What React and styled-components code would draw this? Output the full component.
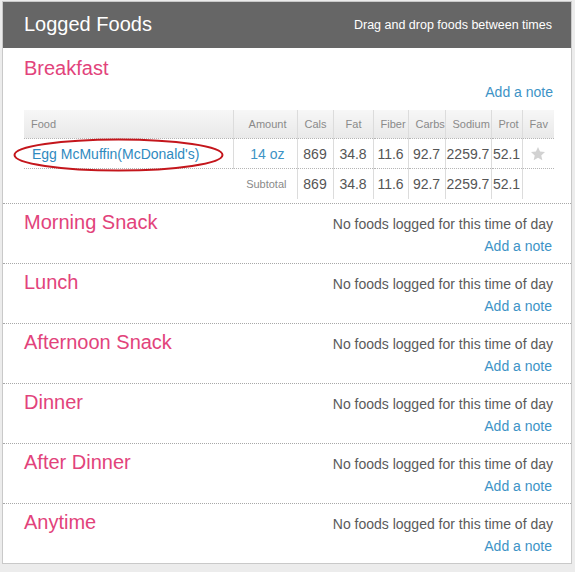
import styled, { createGlobalStyle } from "styled-components";

const GlobalStyle = createGlobalStyle`
  body {
    margin: 0;
    background: #ececec;
    font-family: "Liberation Sans", Arial, sans-serif;
  }
`;

const columns = [
  { key: "food", label: "Food", width: 209, align: "left" },
  { key: "amount", label: "Amount", width: 64, align: "right" },
  { key: "cals", label: "Cals", width: 36 },
  { key: "fat", label: "Fat", width: 40 },
  { key: "fiber", label: "Fiber", width: 35 },
  { key: "carbs", label: "Carbs", width: 37 },
  { key: "sodium", label: "Sodium", width: 46 },
  { key: "prot", label: "Prot", width: 31 },
  { key: "fav", label: "Fav", width: 32 },
];

const food = {
  name: "Egg McMuffin(McDonald's)",
  amount: "14 oz",
  cals: "869",
  fat: "34.8",
  fiber: "11.6",
  carbs: "92.7",
  sodium: "2259.7",
  prot: "52.1",
};

const otherMeals = [
  "Morning Snack",
  "Lunch",
  "Afternoon Snack",
  "Dinner",
  "After Dinner",
  "Anytime",
];

const nutrients = ["cals", "fat", "fiber", "carbs", "sodium", "prot"];

function StarIcon() {
  return (
    <svg width="16" height="16" viewBox="0 0 24 24">
      <polygon
        points="12,1.5 15.1,8.4 22.5,9.1 16.9,14.1 18.5,21.5 12,17.7 5.5,21.5 7.1,14.1 1.5,9.1 8.9,8.4"
        fill="#d2d2d2"
      />
    </svg>
  );
}

function App() {
  return (
    <>
      <GlobalStyle />
      <Panel>
        <Header>
          <HeaderTitle>Logged Foods</HeaderTitle>
          <HeaderHint>Drag and drop foods between times</HeaderHint>
        </Header>

        <Section>
          <TopRow>
            <MealTitle>Breakfast</MealTitle>
          </TopRow>
          <NoteRow>
            <NoteLink>Add a note</NoteLink>
          </NoteRow>
          <TableWrap>
            <Table>
              <colgroup>
                {columns.map((c) => (
                  <col key={c.key} style={{ width: c.width }} />
                ))}
              </colgroup>
              <thead>
                <tr>
                  {columns.map((c) => (
                    <Th key={c.key} $align={c.align} $last={c.key === "fav"}>
                      {c.label}
                    </Th>
                  ))}
                </tr>
              </thead>
              <tbody>
                <FoodRow>
                  <Td $align="left">
                    <FoodName>{food.name}</FoodName>
                  </Td>
                  <Td $align="right">
                    <AmountText>{food.amount}</AmountText>
                  </Td>
                  {nutrients.map((n) => (
                    <Td key={n}>{food[n]}</Td>
                  ))}
                  <Td $last>
                    <StarIcon />
                  </Td>
                </FoodRow>
                <tr>
                  <SubtotalLabel colSpan={2}>Subtotal</SubtotalLabel>
                  {nutrients.map((n) => (
                    <Td key={n}>{food[n]}</Td>
                  ))}
                  <Td $last />
                </tr>
              </tbody>
            </Table>
            <Ellipse width="211" height="34" viewBox="0 0 211 34">
              <ellipse
                cx="105.5"
                cy="17"
                rx="104"
                ry="15.5"
                fill="none"
                stroke="#c4161c"
                strokeWidth="2"
              />
            </Ellipse>
          </TableWrap>
        </Section>

        {otherMeals.map((meal, i) => (
          <Section key={meal} $last={i === otherMeals.length - 1} $compact>
            <TopRow>
              <MealTitle>{meal}</MealTitle>
              <EmptyText>No foods logged for this time of day</EmptyText>
            </TopRow>
            <NoteRow>
              <NoteLink>Add a note</NoteLink>
            </NoteRow>
          </Section>
        ))}
      </Panel>
    </>
  );
}

export default App;

const Panel = styled.div`
  width: 568px;
  margin: 1px 0 3px 2px;
  border: 1px solid #c9c9c9;
  background: #fff;
`;

const Header = styled.div`
  display: flex;
  align-items: center;
  justify-content: space-between;
  height: 46px;
  padding: 0 19px 0 21px;
  background: #666666;
  color: #fff;
`;

const HeaderTitle = styled.h1`
  margin: 0 0 2px;
  font-size: 20px;
  font-weight: normal;
`;

const HeaderHint = styled.span`
  font-size: 12.5px;
  margin-bottom: 1px;
`;

const Section = styled.div`
  padding: ${({ $compact }) => ($compact ? "6px 18px 7px 21px" : "8px 17px 4px 21px")};
  border-bottom: ${({ $last }) => ($last ? "none" : "1px dotted #a8a8a8")};
`;

const TopRow = styled.div`
  display: flex;
  align-items: center;
  justify-content: space-between;
  height: 24px;
`;

const MealTitle = styled.h2`
  margin: 0;
  font-size: 20px;
  font-weight: normal;
  color: #e2437b;
`;

const EmptyText = styled.span`
  font-size: 14px;
  color: #5a5a5a;
  margin-top: 3px;
`;

const NoteRow = styled.div`
  display: flex;
  justify-content: flex-end;
  align-items: center;
  height: 22px;
  margin-right: 1px;
`;

const NoteLink = styled.a`
  margin-top: 2px;
  font-size: 14px;
  color: #3d93c6;
  cursor: pointer;
`;

const TableWrap = styled.div`
  position: relative;
  margin-top: 8px;
  width: 530px;
`;

const Table = styled.table`
  width: 530px;
  table-layout: fixed;
  border-collapse: collapse;
`;

const Th = styled.th`
  height: 28px;
  padding: 0 ${({ $align }) => ($align === "right" ? "10px" : "6px")} 0 7px;
  background: linear-gradient(#f7f7f7, #e9e9e9);
  border-right: ${({ $last }) => ($last ? "none" : "1px solid #dcdcdc")};
  border-bottom: 1px dotted #b5b5b5;
  font-size: 11px;
  font-weight: normal;
  color: #8a8a8a;
  text-align: ${({ $align }) => $align || "center"};
`;

const FoodRow = styled.tr`
  & > td {
    border-bottom: 1px dotted #b5b5b5;
  }
`;

const Td = styled.td`
  height: 29px;
  padding: 0 ${({ $align }) => ($align === "right" ? "12px" : "0")} 0
    ${({ $align }) => ($align === "left" ? "8px" : "0")};
  border-right: ${({ $last }) => ($last ? "none" : "1px solid #dcdcdc")};
  font-size: 14px;
  color: #555;
  text-align: ${({ $align }) => $align || "center"};
  white-space: nowrap;
  overflow: visible;
  vertical-align: middle;

  svg {
    display: block;
    margin: 1px auto 0;
  }
`;

const FoodName = styled.a`
  color: #2f8ac0;
  cursor: pointer;
`;

const AmountText = styled.span`
  color: #3d93c6;
`;

const SubtotalLabel = styled.td`
  height: 30px;
  padding: 0 10px 0 0;
  border-right: 1px solid #dcdcdc;
  font-size: 11px;
  color: #8a8a8a;
  text-align: right;
`;

const Ellipse = styled.svg`
  position: absolute;
  left: -11px;
  top: 28px;
  pointer-events: none;
`;
